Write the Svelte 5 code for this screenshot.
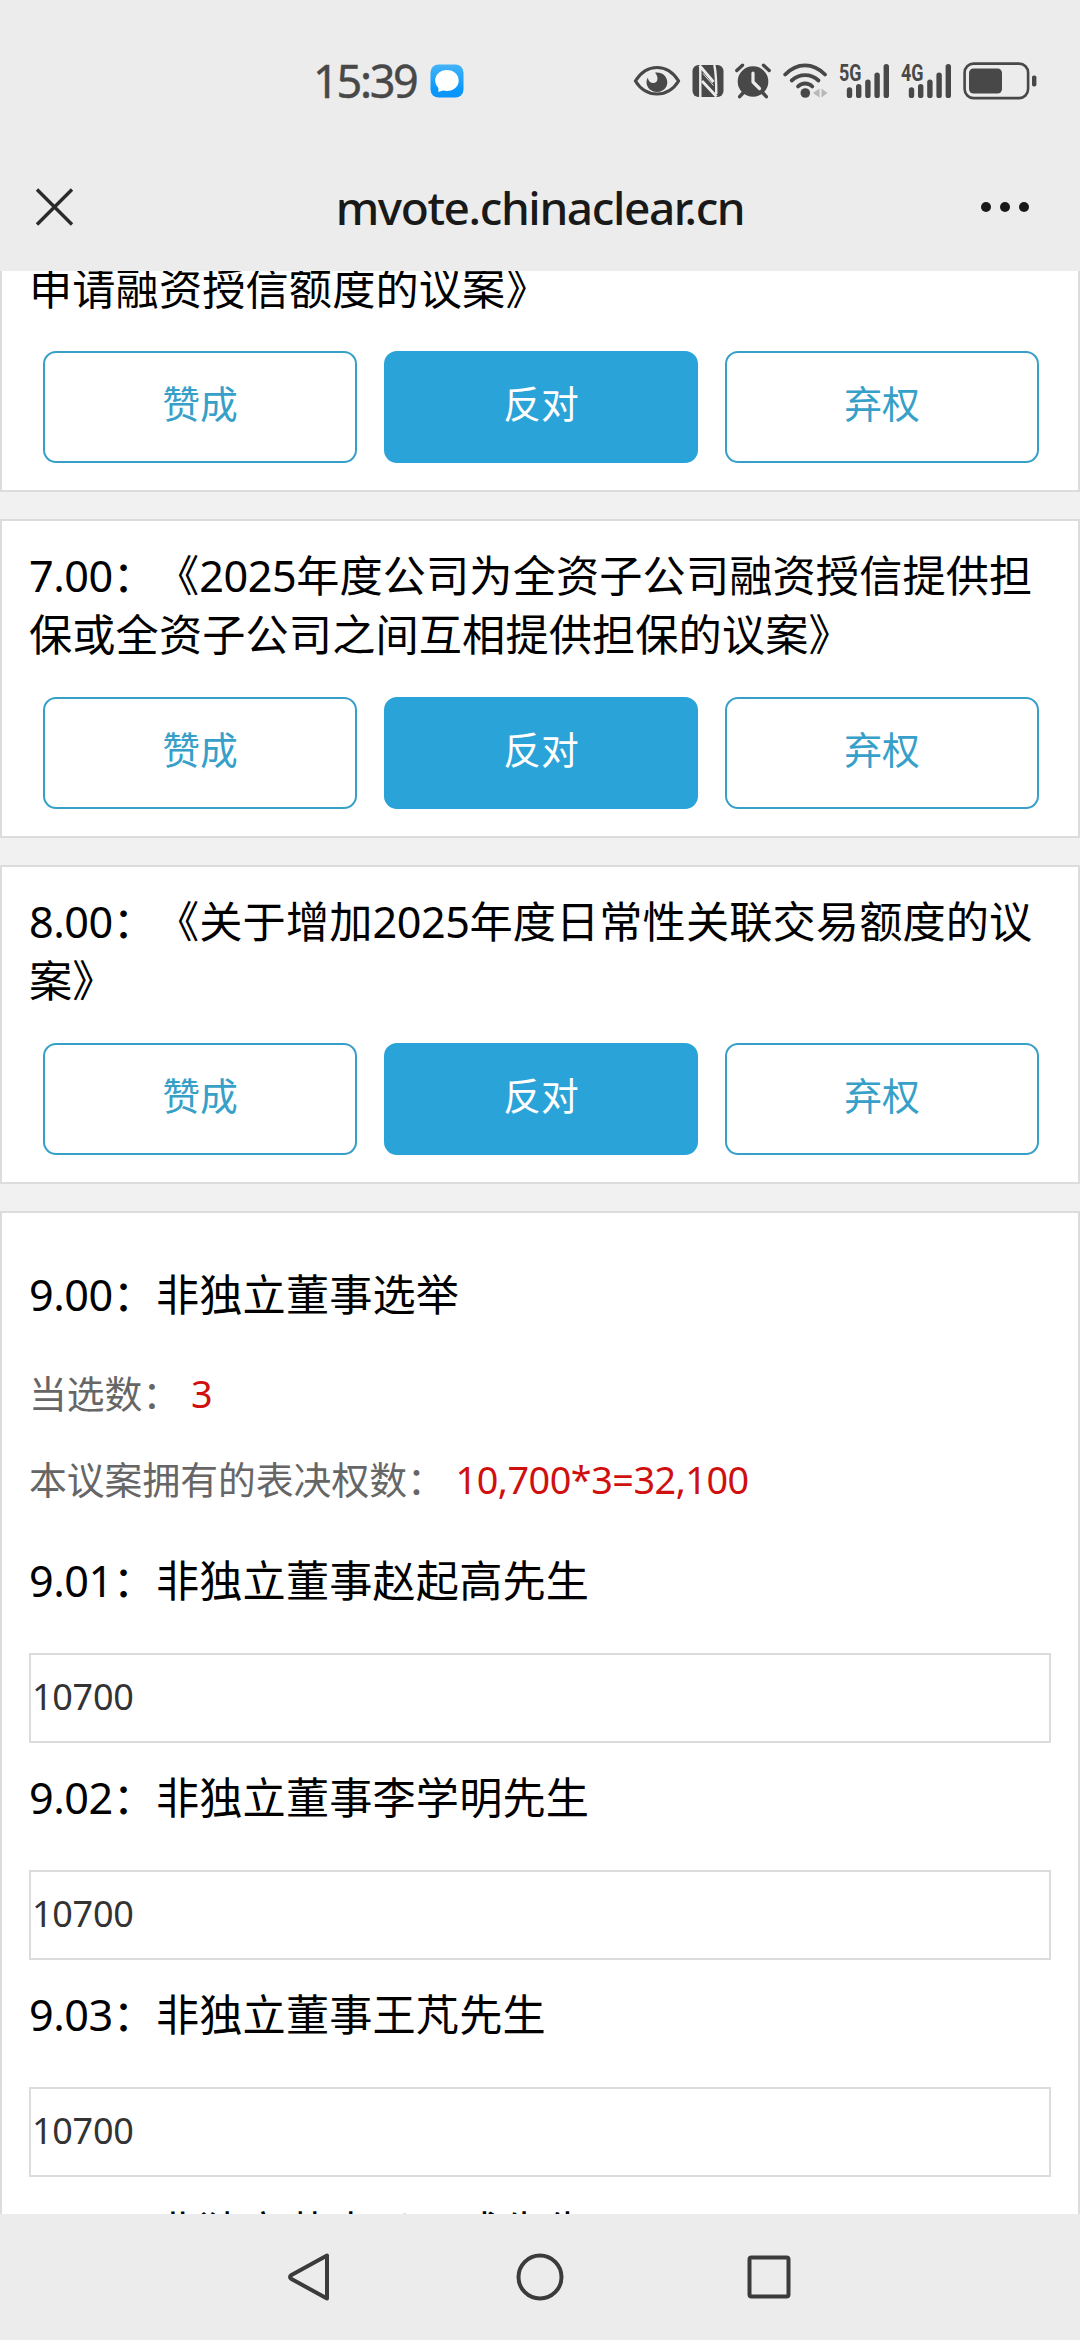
<script>
  const options = ['赞成', '反对', '弃权'];
  const proposals = [
    { title: '申请融资授信额度的议案》', partial: true },
    { title: '7.00：《2025年度公司为全资子公司融资授信提供担\n保或全资子公司之间互相提供担保的议案》' },
    { title: '8.00：《关于增加2025年度日常性关联交易额度的议\n案》' }
  ];
  const candidates = [
    { title: '9.01：非独立董事赵起高先生', votes: '10700' },
    { title: '9.02：非独立董事李学明先生', votes: '10700' },
    { title: '9.03：非独立董事王芃先生', votes: '10700' },
    { title: '9.04：非独立董事马正成先生', votes: '10700' }
  ];
  const bars = [10.6, 14, 18.3, 25.3, 34];

  // Splits a title into number runs and the text between them.
  const runs = (text) => text.split(/([\d.]+)/).filter(Boolean);
</script>

{#snippet signal(label)}
  <svg class="signal" width="52" height="38" viewBox="0 0 52 38">
    <text x="0" y="19.200" font-size="23" textLength="22.5" lengthAdjust="spacingAndGlyphs">{label}</text>
    {#each bars as h, i}
      <line x1={10.5 + i * 9.2} x2={10.5 + i * 9.2} y1={33.4} y2={38.600 - h} />
    {/each}
  </svg>
{/snippet}

{#snippet heading(text)}
  <p class="title">{#each runs(text) as run}<span class:num={/\d/.test(run)}>{run}</span>{/each}</p>
{/snippet}

<div class="screen">
  <header>
    <div class="status">
      <div class="clock">
        <span class="time">15:39</span>
        <svg width="34" height="34" viewBox="0 0 34 34">
          <defs>
            <linearGradient id="msg" x1="0" y1="0" x2="0" y2="1">
              <stop offset="0" stop-color="#43b3f8" />
              <stop offset=".75" stop-color="#0a98fb" />
              <stop offset="1" stop-color="#0a94fa" />
            </linearGradient>
          </defs>
          <rect x=".5" y=".5" width="33" height="33" rx="8" fill="url(#msg)" />
          <path d="M17 6C10.400 6 5.200 10.500 5.200 16.500c0 3 1.300 5.200 3.200 7.200v4.200l4.500-1.300c1.300.3 2.700.4 4.100.4 6.500 0 11.700-4.400 11.700-10.500S23.500 6 17 6z" fill="#fff" />
        </svg>
      </div>
      <div class="indicators">
        <svg class="eye" width="48" height="34" viewBox="0 0 48 34">
          <path d="M2.400 17C8 8 15.500 3.500 24 3.500S40 8 45.600 17C40 26 32.500 30 24 30S8 26 2.400 17z" fill="none" stroke="#484848" stroke-width="3.200" stroke-linejoin="round" />
          <path d="M22 8.700c6.500-1.200 12.300 3.300 12.300 9.600 0 5.600-4.500 9.700-10.200 9.700-5.800 0-10.600-4.200-10.600-9.700 0-1.600.4-3.200 1.200-4.500.8 3.700 3.400 5.700 6.300 5.200 4.300-.8 4.700-6.300 1-10.300z" fill="#484848" />
        </svg>
        <svg class="nfc" width="32" height="34" viewBox="0 0 32 34">
          <rect x=".5" y="1" width="31" height="32" rx="6" fill="#484848" />
          <path d="M8.300 3v30M22.300 1c1.400 6 2 12 2 29" fill="none" stroke="#ececec" stroke-width="2.400" />
          <path d="M7.500 1.500L21.500 18M10 17l14.500 15.500" stroke="#ececec" stroke-width="2.800" />
          <path d="M11 9.500l10.500 12" stroke="#ececec" stroke-width="1" />
        </svg>
        <svg class="alarm" width="36" height="36" viewBox="0 0 36 36">
          <circle cx="18" cy="18.500" r="15.300" fill="#484848" />
          <path d="M1.800 7.500L7.500 2.200M34.200 7.500L28.500 2.200M8 30l-3.300 3.700M28 30l3.300 3.700" stroke="#484848" stroke-width="3.400" stroke-linecap="round" />
          <path d="M18 10v9l6.500 6.500" fill="none" stroke="#ececec" stroke-width="3.200" stroke-linecap="round" stroke-linejoin="round" />
        </svg>
        <svg class="wifi" width="46" height="36" viewBox="0 0 46 36">
          <g fill="none" stroke="#484848" stroke-width="3.800" stroke-linecap="round">
            <path d="M2.200 11.500C14-.7 30-.7 42 11.500" />
            <path d="M8.700 17.500c7.800-7.300 19-7.300 26.800 0" />
            <path d="M15 23.500c4-4 10.300-4 14.300 0" />
          </g>
          <circle cx="22.300" cy="30" r="4.800" fill="#484848" />
          <path d="M36.500 25.500v9L30 30zM38.500 25.500v9L44.500 30z" fill="#b8b8b8" />
        </svg>
        {@render signal('5G')}
        {@render signal('4G')}
        <svg class="battery" width="74" height="38" viewBox="0 0 74 38">
          <rect x="1.600" y="1.600" width="63.500" height="34.500" rx="9" fill="none" stroke="#484848" stroke-width="2.600" />
          <rect x="6" y="6.500" width="33" height="25" rx="4.500" fill="#484848" />
          <rect x="69" y="13.500" width="4.400" height="11" rx="1.800" fill="#484848" />
        </svg>
      </div>
    </div>
    <div class="titlebar">
      <svg width="40" height="40" viewBox="0 0 40 40">
        <path d="M3 2.500l35 35M38 2.500L3 37.500" stroke="#2a2a2a" stroke-width="3.400" />
      </svg>
      <h1>mvote.chinaclear.cn</h1>
      <svg class="more" width="50" height="12" viewBox="0 0 50 12" fill="#191919">
        <circle cx="6" cy="6" r="5" /><circle cx="25" cy="6" r="5" /><circle cx="44" cy="6" r="5" />
      </svg>
    </div>
  </header>

  <main>
    {#each proposals as p}
      <section class="card" class:partial={p.partial}>
        {@render heading(p.title)}
        <div class="options">
          {#each options as option, i}
            <button class:selected={i === 1}>{option}</button>
          {/each}
        </div>
      </section>
    {/each}

    <section class="card election">
      {@render heading('9.00：非独立董事选举')}
      <div class="summary">
        <p class="info">当选数： <span>3</span></p>
        <p class="info">本议案拥有的表决权数： <span>10,700*3=32,100</span></p>
      </div>
      {#each candidates as c}
        <div class="candidate">
          {@render heading(c.title)}
          <input type="text" value={c.votes} />
        </div>
      {/each}
    </section>
  </main>

  <nav>
    <svg width="50" height="50" viewBox="0 0 50 50"><path d="M41 3.500v43L5.500 27q-3-2 0-4z" /></svg>
    <svg width="50" height="50" viewBox="0 0 50 50"><circle cx="25" cy="25" r="21.500" /></svg>
    <svg width="50" height="50" viewBox="0 0 50 50"><rect x="5.500" y="5.500" width="39" height="39" rx="2" /></svg>
  </nav>
</div>

<style>
  :global(body) { margin: 0; }
  .screen {
    display: flex;
    flex-direction: column;
    width: 1080px;
    height: 2340px;
    overflow: hidden;
    background: #f1f1f1;
    font-family: "Noto Sans", "Noto Sans CJK SC", sans-serif;
    text-spacing-trim: space-all;
  }
  p, h1 { margin: 0; font-weight: 400; }
  svg { display: block; flex: none; }
  header { flex: none; height: 271px; background: #ececec; }
  .status {
    display: flex;
    justify-content: space-between;
    height: 161px;
    box-sizing: border-box;
    padding: 0 43px 0 313px;
    align-items: center;
  }
  .clock { display: flex; align-items: center; gap: 13px; }
  .time { width: 104px; font-size: 45px; line-height: 60px; color: #484848; letter-spacing: -2.3px; white-space: nowrap; -webkit-text-stroke: .4px #484848; }
  .indicators { display: flex; align-items: center; }
  .nfc { margin-left: 11px; }
  .alarm { margin-left: 11px; }
  .wifi { margin-left: 12px; }
  .signal { margin-left: 10px; overflow: visible; fill: #484848; font-weight: 700; font-family: Roboto, sans-serif; }
  .signal line { stroke: #484848; stroke-width: 5.4; stroke-linecap: round; }
  .battery { margin-left: 10px; }
  .titlebar {
    display: grid;
    grid-template-columns: 60px 1fr 60px;
    align-items: center;
    height: 92px;
    padding: 0 50px 0 34px;
  }
  .more { justify-self: end; }
  h1 { padding-left: 16px; white-space: nowrap; text-align: center; font-size: 46px; font-weight: 500; line-height: 60px; color: #191919; letter-spacing: -1.4px; }
  main { flex: 1; min-height: 0; overflow: hidden; }
  .card {
    display: flow-root;
    box-sizing: border-box;
    height: 319px;
    margin-bottom: 27px;
    padding: 25px 27px 0;
    border: 2px solid #dcdcdc;
    background: #fff;
  }
  .title { font-size: 43.2px; line-height: 59px; color: #000; white-space: pre; letter-spacing: .12px; }
  .num { letter-spacing: -.5px; }
  .partial { height: 221px; padding-top: 0; border-top: 0; }
  .partial .title { margin-top: -12px; }
  .options { display: grid; grid-template-columns: repeat(3, 314px); gap: 27px; margin: 33px 0 0 14px; }
  button {
    height: 112px;
    padding: 0 0 11px;
    border: 2px solid #37a0c8;
    border-radius: 13px;
    background: #fff;
    color: #37a0c8;
    font: 37.8px "Noto Sans", "Noto Sans CJK SC", sans-serif;
  }
  .selected { background: #29a3d8; border-color: #29a3d8; color: #fff; }
  .election { height: 1300px; padding-top: 52px; }
  .summary { margin: 27px 0 26px; }
  .info { font-size: 37.8px; line-height: 86px; color: #666; white-space: pre; }
  .info span { margin-left: 1px; color: #d00f0f; letter-spacing: -.5px; }
  .candidate { height: 217px; padding-top: 2px; box-sizing: border-box; }
  input {
    display: block;
    box-sizing: border-box;
    width: 1022px;
    height: 90px;
    margin-top: 43px;
    padding: 0 0 3px 1px;
    border: 2px solid #dcdcdc;
    border-radius: 0;
    font: 36px "Noto Sans", sans-serif;
    letter-spacing: -.3px;
    color: #333;
  }
  nav {
    display: flex;
    flex: none;
    justify-content: center;
    align-items: center;
    gap: 179px;
    height: 126px;
    background: #ececec;
  }
  nav path, nav circle, nav rect { fill: none; stroke: #3b3b3b; stroke-width: 4; stroke-linejoin: round; }
</style>
